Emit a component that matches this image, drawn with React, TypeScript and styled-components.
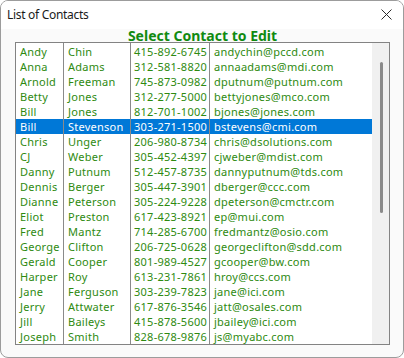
import React from "react";
import styled, { createGlobalStyle } from "styled-components";

const GlobalStyle = createGlobalStyle`
  html, body {
    margin: 0;
    padding: 0;
    width: 404px;
    height: 358px;
    overflow: hidden;
    background: #ffffff;
  }
  * { box-sizing: border-box; }
`;

type Contact = { first: string; last: string; phone: string; email: string };

const contacts: Contact[] = [
  { first: "Andy", last: "Chin", phone: "415-892-6745", email: "andychin@pccd.com" },
  { first: "Anna", last: "Adams", phone: "312-581-8820", email: "annaadams@mdi.com" },
  { first: "Arnold", last: "Freeman", phone: "745-873-0982", email: "dputnum@putnum.com" },
  { first: "Betty", last: "Jones", phone: "312-277-5000", email: "bettyjones@mco.com" },
  { first: "Bill", last: "Jones", phone: "812-701-1002", email: "bjones@jones.com" },
  { first: "Bill", last: "Stevenson", phone: "303-271-1500", email: "bstevens@cmi.com" },
  { first: "Chris", last: "Unger", phone: "206-980-8734", email: "chris@dsolutions.com" },
  { first: "CJ", last: "Weber", phone: "305-452-4397", email: "cjweber@mdist.com" },
  { first: "Danny", last: "Putnum", phone: "512-457-8735", email: "dannyputnum@tds.com" },
  { first: "Dennis", last: "Berger", phone: "305-447-3901", email: "dberger@ccc.com" },
  { first: "Dianne", last: "Peterson", phone: "305-224-9228", email: "dpeterson@cmctr.com" },
  { first: "Eliot", last: "Preston", phone: "617-423-8921", email: "ep@mui.com" },
  { first: "Fred", last: "Mantz", phone: "714-285-6700", email: "fredmantz@osio.com" },
  { first: "George", last: "Clifton", phone: "206-725-0628", email: "georgeclifton@sdd.com" },
  { first: "Gerald", last: "Cooper", phone: "801-989-4527", email: "gcooper@bw.com" },
  { first: "Harper", last: "Roy", phone: "613-231-7861", email: "hroy@ccs.com" },
  { first: "Jane", last: "Ferguson", phone: "303-239-7823", email: "jane@ici.com" },
  { first: "Jerry", last: "Attwater", phone: "617-876-3546", email: "jatt@osales.com" },
  { first: "Jill", last: "Baileys", phone: "415-878-5600", email: "jbailey@ici.com" },
  { first: "Joseph", last: "Smith", phone: "828-678-9876", email: "js@myabc.com" },
];

const SELECTED = 5;

const Window = styled.div`
  width: 404px;
  height: 358px;
  border: 1px solid #9c9c9c;
  border-radius: 8px;
  background: #fafafa;
  display: flex;
  flex-direction: column;
  overflow: hidden;
  font-family: "Noto Sans", "Open Sans", sans-serif;
`;

const TitleBar = styled.div`
  height: 28px;
  display: flex;
  align-items: center;
  justify-content: space-between;
  padding: 0 11px 2px 6px;
  background: #ffffff;
`;

const TitleText = styled.span`
  font-size: 12px;
  color: #1a1a1a;
  letter-spacing: -0.3px;
`;

const CloseButton = styled.span`
  width: 12px;
  height: 12px;
  display: flex;
  align-items: center;
  justify-content: center;
`;

const Client = styled.div`
  flex: 1;
  display: flex;
  flex-direction: column;
  padding: 0 13px 12px 14px;
`;

const Heading = styled.div`
  height: 13px;
  line-height: 14px;
  text-align: center;
  font-weight: 700;
  font-size: 14px;
  color: #108a10;
`;

const ListBox = styled.div`
  height: 303px;
  border: 1px solid #838383;
  background: #ffffff;
  display: flex;
  overflow: hidden;
`;

const Rows = styled.div`
  flex: 1;
  display: flex;
  flex-direction: column;
`;

const Row = styled.div`
  display: grid;
  grid-template-columns: 48px 67px 79px 1fr;
`;

const Cell = styled.div<{ $selected: boolean; $pad?: number; $last?: boolean }>`
  height: 15px;
  line-height: 15px;
  font-size: 11px;
  letter-spacing: 0.25px;
  white-space: nowrap;
  overflow: hidden;
  padding-left: ${(p) => p.$pad ?? 4}px;
  color: ${(p) => (p.$selected ? "#ffffff" : "#2e8a10")};
  background: ${(p) => (p.$selected ? "#0078d7" : "transparent")};
  border-right: ${(p) => (p.$last ? "none" : "1px solid #8a8a8a")};
  ${Row}:first-child & {
    box-sizing: content-box;
    padding-top: 1px;
  }
`;

const Scrollbar = styled.div`
  width: 17px;
  background: #f0f0f0;
  display: flex;
  flex-direction: column;
  align-items: center;
  padding-top: 19px;
`;

const Thumb = styled.div`
  width: 3px;
  height: 151px;
  margin-left: 1px;
  border-radius: 2px;
  background: #8a8a8a;
`;

export default function App() {
  return (
    <>
      <GlobalStyle />
      <Window>
        <TitleBar>
          <TitleText>List of Contacts</TitleText>
          <CloseButton>
            <svg width="11" height="11" viewBox="0 0 11 11">
              <path d="M0.5 0.5 L10.5 10.5 M10.5 0.5 L0.5 10.5" stroke="#2b2b2b" strokeWidth="1" fill="none" />
            </svg>
          </CloseButton>
        </TitleBar>
        <Client>
          <Heading>Select Contact to Edit</Heading>
          <ListBox>
            <Rows>
              {contacts.map((c, i) => {
                const sel = i === SELECTED;
                return (
                  <Row key={i}>
                    <Cell $selected={sel}>{c.first}</Cell>
                    <Cell $selected={sel}>{c.last}</Cell>
                    <Cell $selected={sel} $pad={3}>{c.phone}</Cell>
                    <Cell $selected={sel} $last>{c.email}</Cell>
                  </Row>
                );
              })}
            </Rows>
            <Scrollbar>
              <Thumb />
            </Scrollbar>
          </ListBox>
        </Client>
      </Window>
    </>
  );
}
